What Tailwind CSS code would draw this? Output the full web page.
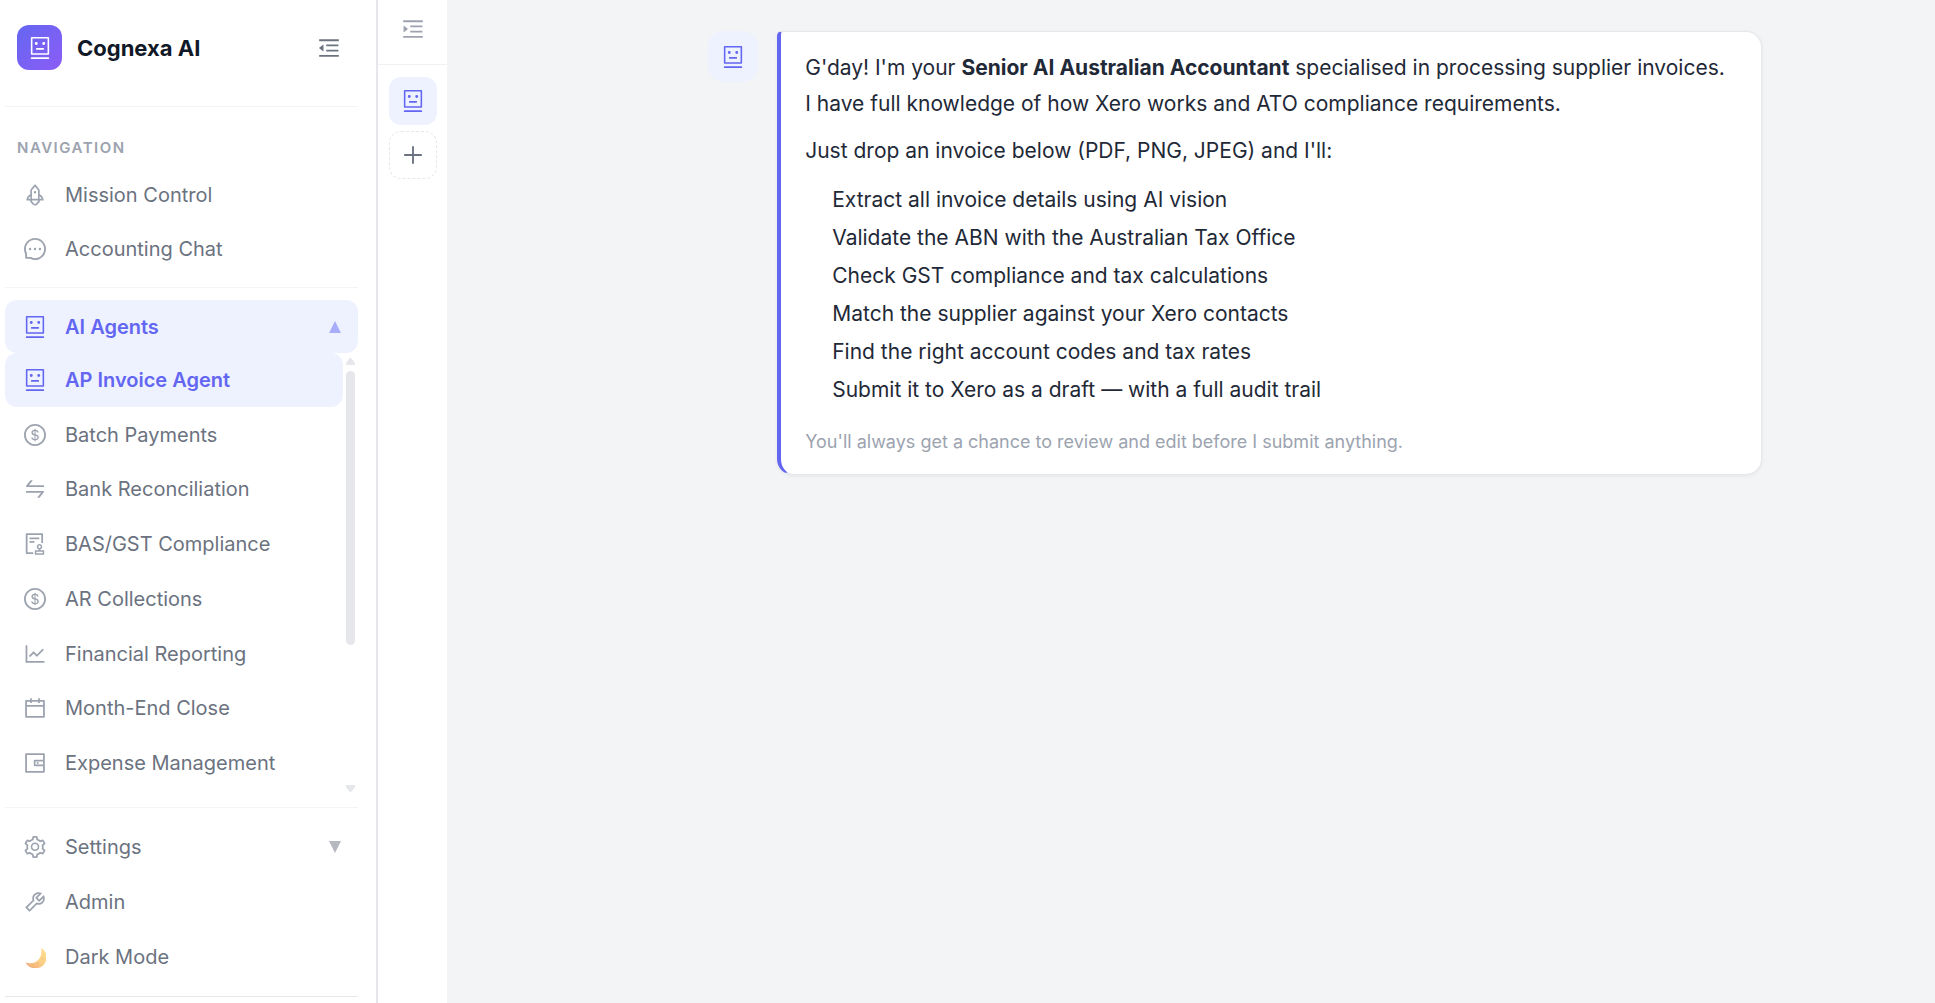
<!DOCTYPE html>
<html lang="en">
<head>
<meta charset="utf-8">
<title>Cognexa AI</title>
<script src="https://cdn.jsdelivr.net/npm/@tailwindcss/browser@4"></script>
</head>
<body class="bg-[#f3f4f6] font-['Inter',sans-serif] text-[#6b7280]">
<!-- Icon set -->
<svg class="hidden" aria-hidden="true">
  <symbol id="robot" viewBox="64 64 896 896"><path d="M300 328a60 60 0 10120 0 60 60 0 10-120 0zM852 64H172c-17.700 0-32 14.300-32 32v660c0 17.700 14.300 32 32 32h680c17.700 0 32-14.300 32-32V96c0-17.700-14.300-32-32-32zm-32 660H204V128h616v596zM604 328a60 60 0 10120 0 60 60 0 10-120 0zm250.200 556H169.800c-16.500 0-29.800 14.300-29.800 32v36c0 4.400 3.300 8 7.400 8h729.100c4.100 0 7.400-3.600 7.400-8v-36c.1-17.700-13.200-32-29.700-32zM664 508H360c-4.400 0-8 3.600-8 8v60c0 4.400 3.600 8 8 8h304c4.400 0 8-3.600 8-8v-60c0-4.400-3.600-8-8-8z"/></symbol>
  <symbol id="bars" viewBox="64 64 896 896"><path d="M408 442h480c4.400 0 8-3.600 8-8v-56c0-4.400-3.600-8-8-8H408c-4.400 0-8 3.600-8 8v56c0 4.400 3.600 8 8 8zm-8 204c0 4.400 3.600 8 8 8h480c4.400 0 8-3.600 8-8v-56c0-4.400-3.600-8-8-8H408c-4.400 0-8 3.600-8 8v56zm504-486H120c-4.400 0-8 3.600-8 8v56c0 4.400 3.600 8 8 8h784c4.400 0 8-3.600 8-8v-56c0-4.400-3.600-8-8-8zm0 632H120c-4.400 0-8 3.600-8 8v56c0 4.400 3.600 8 8 8h784c4.400 0 8-3.600 8-8v-56c0-4.400-3.600-8-8-8z"/></symbol>
  <symbol id="rocket" viewBox="64 64 896 896"><path d="M864 736c0-111.600-65.400-208-160-252.900V317.300c0-15.100-5.300-29.700-15.100-41.200L536.500 95.400C530.100 87.800 521 84 512 84s-18.100 3.800-24.500 11.400L335.100 276.100a63.970 63.970 0 00-15.100 41.200v165.800C225.400 528 160 624.400 160 736h156.500c-2.300 7.200-3.500 15-3.500 23.800 0 22.100 7.600 43.700 21.400 60.800a97.200 97.200 0 0043.100 30.600c23.100 54 75.600 88.800 134.500 88.800 29.100 0 57.300-8.600 81.400-24.800 23.600-15.800 41.900-37.900 53-64a97 97 0 0043.100-30.500 97.520 97.520 0 0021.400-60.800c0-8.400-1.100-16.400-3.100-23.800H864zM762.300 621.400c9.400 14.600 17 30.300 22.500 46.600H700V558.700a211.600 211.600 0 0162.300 62.700zM388 483.100V318.800l124-147 124 147V668H388V483.100zM239.200 668c5.500-16.300 13.100-32 22.500-46.600 16.300-25.200 37.500-46.500 62.300-62.700V668h-84.800zm388.900 116.200c-5.200 3-11.200 4.200-17.100 3.400l-19.500-2.400-2.800 19.400c-5.400 37.900-38.400 66.500-76.700 66.500-38.300 0-71.300-28.600-76.700-66.500l-2.800-19.500-19.500 2.500a27.700 27.700 0 01-17.100-3.500c-8.700-5-14.100-14.300-14.100-24.400 0-10.600 5.900-19.400 14.600-23.800h231.300c8.800 4.500 14.600 13.300 14.600 23.800-.1 10.200-5.500 19.600-14.200 24.500zM464 400a48 48 0 1096 0 48 48 0 10-96 0z"/></symbol>
  <symbol id="message" viewBox="64 64 896 896"><path d="M464 512a48 48 0 1096 0 48 48 0 10-96 0zm200 0a48 48 0 1096 0 48 48 0 10-96 0zm-400 0a48 48 0 1096 0 48 48 0 10-96 0zm661.200-173.600c-22.600-53.700-55-101.900-96.300-143.300a444.350 444.350 0 00-143.300-96.300C630.600 75.700 572.200 64 512 64h-2c-60.600.3-119.300 12.300-174.500 35.900a445.350 445.350 0 00-142 96.500c-40.900 41.300-73 89.300-95.200 142.800-23 55.400-34.600 114.300-34.300 174.900A449.400 449.400 0 00112 714v152a46 46 0 0046 46h152.100A449.400 449.400 0 00510 960h2.100c59.900 0 118-11.600 172.700-34.300a444.480 444.480 0 00142.800-95.200c41.300-40.900 73.800-88.700 96.500-142 23.600-55.200 35.600-113.900 35.900-174.500.3-60.900-11.500-120-34.800-175.600zm-151.100 438C704 845.800 611 884 512 884h-1.700c-60.300-.3-120.200-15.300-173.100-43.500l-8.400-4.500H188V695.200l-4.500-8.400C155.300 633.900 140.300 574 140 513.700c-.4-99.700 37.700-193.300 107.600-263.800 69.800-70.500 163.100-109.500 262.800-109.900h1.700c50 0 98.500 9.700 144.200 28.900 44.600 18.700 84.600 45.600 119 80 34.300 34.300 61.300 74.400 80 119 19.400 46.200 29.100 95.200 28.900 145.800-.6 99.600-39.700 192.900-110.100 262.700z"/></symbol>
  <symbol id="dollar" viewBox="64 64 896 896"><path d="M512 64C264.600 64 64 264.600 64 512s200.600 448 448 448 448-200.600 448-448S759.400 64 512 64zm0 820c-205.400 0-372-166.600-372-372s166.600-372 372-372 372 166.600 372 372-166.600 372-372 372zm47.700-395.200l-25.400-5.900V348.600c38 5.200 61.500 29 65.500 58.200.5 4 3.900 6.900 7.900 6.900h44.900c4.700 0 8.400-4.100 8-8.800-6.100-62.300-57.400-102.300-125.900-109.200V263c0-4.400-3.600-8-8-8h-28.100c-4.400 0-8 3.600-8 8v33c-70.800 6.900-126.200 46-126.200 119 0 67.600 49.800 100.200 102.100 112.700l24.700 6.300v142.700c-44.200-5.900-69-29.500-74.100-61.300-.6-3.800-4-6.600-7.900-6.600H363c-4.700 0-8.400 4-8 8.700 4.500 55 46.200 105.600 135.200 112.100V761c0 4.400 3.600 8 8 8h28.400c4.400 0 8-3.600 8-8.100l-.2-31.700c78.300-6.900 134.300-48.800 134.300-124-.1-69.400-44.200-100.400-109-116.400zm-68.600-16.200c-5.600-1.600-10.300-3.100-15-5-33.800-12.200-49.500-31.900-49.500-57.300 0-36.300 27.500-57 64.500-61.700v124zM534.300 677V543.300c3.100.9 5.900 1.600 8.800 2.200 47.300 14.400 63.200 34.400 63.200 65.100 0 39.100-29.400 62.600-72 66.400z"/></symbol>
  <symbol id="swap" viewBox="64 64 896 896"><path d="M847.900 592H152c-4.400 0-8 3.600-8 8v60c0 4.400 3.600 8 8 8h605.200L612.900 851c-4.100 5.200-.4 13 6.300 13h72.500c4.900 0 9.500-2.200 12.600-6.100l168.800-214.100c16.500-21 1.600-51.800-25.200-51.800zM872 356H266.800l144.300-183c4.100-5.200.4-13-6.300-13h-72.500c-4.900 0-9.500 2.200-12.600 6.100L150.900 380.200c-16.500 21-1.600 51.800 25.100 51.800h696c4.400 0 8-3.600 8-8v-60c0-4.400-3.600-8-8-8z"/></symbol>
  <symbol id="audit" viewBox="64 64 896 896"><path d="M296 250c-4.400 0-8 3.600-8 8v48c0 4.400 3.600 8 8 8h384c4.400 0 8-3.600 8-8v-48c0-4.400-3.600-8-8-8H296zm184 144H296c-4.400 0-8 3.600-8 8v48c0 4.400 3.600 8 8 8h184c4.400 0 8-3.600 8-8v-48c0-4.400-3.600-8-8-8zm-48 458H208V148h560v320c0 4.400 3.600 8 8 8h56c4.400 0 8-3.600 8-8V108c0-17.700-14.300-32-32-32H168c-17.700 0-32 14.300-32 32v784c0 17.700 14.300 32 32 32h264c4.400 0 8-3.600 8-8v-56c0-4.400-3.600-8-8-8zm440-88H728v-36.600c46.300-13.800 80-56.600 80-107.400 0-61.900-50.100-112-112-112s-112 50.100-112 112c0 50.700 33.700 93.600 80 107.400V764H520c-8.800 0-16 7.200-16 16v152c0 8.800 7.200 16 16 16h352c8.800 0 16-7.200 16-16V780c0-8.800-7.200-16-16-16zM646 620c0-27.600 22.400-50 50-50s50 22.400 50 50-22.400 50-50 50-50-22.400-50-50zm180 266H566v-60h260v60z"/></symbol>
  <symbol id="chart" viewBox="64 64 896 896"><path d="M888 792H200V168c0-4.400-3.600-8-8-8h-56c-4.400 0-8 3.600-8 8v688c0 4.400 3.600 8 8 8h752c4.400 0 8-3.600 8-8v-56c0-4.400-3.600-8-8-8zM305.800 637.700c3.100 3.100 8.100 3.100 11.300 0l138.300-137.600L583 628.500c3.100 3.100 8.200 3.100 11.300 0l275.400-275.300c3.100-3.100 3.100-8.200 0-11.300l-39.600-39.600a8.030 8.030 0 00-11.300 0l-230 229.900L461.400 404a8.030 8.030 0 00-11.300 0L266.300 586.700a8.030 8.030 0 000 11.300l39.500 39.700z"/></symbol>
  <symbol id="calendar" viewBox="64 64 896 896"><path d="M880 184H712v-64c0-4.400-3.600-8-8-8h-56c-4.400 0-8 3.600-8 8v64H384v-64c0-4.400-3.600-8-8-8h-56c-4.400 0-8 3.600-8 8v64H144c-17.700 0-32 14.300-32 32v664c0 17.700 14.300 32 32 32h736c17.700 0 32-14.300 32-32V216c0-17.700-14.300-32-32-32zm-40 656H184V460h656v380zM184 392V256h128v48c0 4.400 3.600 8 8 8h56c4.400 0 8-3.600 8-8v-48h256v48c0 4.400 3.600 8 8 8h56c4.400 0 8-3.600 8-8v-48h128v136H184z"/></symbol>
  <symbol id="wallet" viewBox="64 64 896 896"><path d="M880 112H144c-17.700 0-32 14.300-32 32v736c0 17.700 14.300 32 32 32h736c17.700 0 32-14.300 32-32V144c0-17.700-14.300-32-32-32zm-40 464H528V448h312v128zm0 264H184V184h656v200H496c-17.700 0-32 14.300-32 32v192c0 17.700 14.300 32 32 32h344v200zM580 512a40 40 0 1080 0 40 40 0 10-80 0z"/></symbol>
  <symbol id="setting" viewBox="64 64 896 896"><path d="M924.800 625.700l-65.500-56c3.100-19 4.700-38.400 4.700-57.800s-1.600-38.800-4.700-57.800l65.500-56a32.030 32.030 0 009.300-35.200l-.9-2.600a443.740 443.740 0 00-79.700-137.900l-1.800-2.100a32.120 32.120 0 00-35.100-9.500l-81.300 28.900c-30-24.600-63.500-44-99.700-57.600l-15.700-85a32.050 32.050 0 00-25.800-25.700l-2.700-.5c-52.100-9.400-106.900-9.400-159 0l-2.700.5a32.050 32.050 0 00-25.800 25.700l-15.800 85.400a351.860 351.860 0 00-99 57.400l-81.900-29.100a32 32 0 00-35.100 9.500l-1.800 2.100a446.020 446.020 0 00-79.700 137.900l-.9 2.600c-4.500 12.500-.8 26.500 9.300 35.200l66.300 56.600c-3.100 18.800-4.600 38-4.600 57.100 0 19.200 1.500 38.400 4.600 57.100L99 625.500a32.030 32.030 0 00-9.300 35.200l.9 2.600c18.100 50.400 44.900 96.900 79.700 137.900l1.800 2.100a32.120 32.120 0 0035.100 9.500l81.900-29.100c29.800 24.500 63.100 43.900 99 57.400l15.800 85.400a32.050 32.050 0 0025.800 25.700l2.700.5a449.400 449.400 0 00159 0l2.700-.5a32.050 32.050 0 0025.800-25.700l15.700-85a350 350 0 0099.700-57.600l81.300 28.900a32 32 0 0035.100-9.500l1.800-2.100c34.800-41.100 61.600-87.500 79.700-137.900l.9-2.600c4.500-12.300.8-26.300-9.300-35zM788.300 465.900c2.500 15.100 3.800 30.600 3.800 46.100s-1.300 31-3.800 46.100l-6.600 40.100 74.700 63.900a370.030 370.030 0 01-42.600 73.600L721 702.800l-31.400 25.800c-23.900 19.600-50.500 35-79.300 45.800l-38.100 14.300-17.900 97a377.500 377.500 0 01-85 0l-17.900-97.200-37.800-14.500c-28.500-10.800-55-26.200-78.700-45.700l-31.400-25.900-93.400 33.200c-17-22.900-31.200-47.600-42.600-73.600l75.500-64.500-6.500-40c-2.400-14.900-3.700-30.300-3.700-45.500 0-15.300 1.200-30.600 3.700-45.500l6.500-40-75.500-64.500c11.300-26.100 25.600-50.700 42.600-73.600l93.400 33.200 31.400-25.900c23.700-19.500 50.200-34.900 78.700-45.700l37.900-14.300 17.900-97.200c28.100-3.200 56.800-3.200 85 0l17.900 97 38.100 14.300c28.700 10.800 55.400 26.200 79.300 45.800l31.400 25.800 92.800-32.900c17 22.900 31.200 47.600 42.600 73.600L781.800 426l6.500 39.900zM512 326c-97.200 0-176 78.800-176 176s78.800 176 176 176 176-78.800 176-176-78.800-176-176-176zm79.200 255.200A111.600 111.600 0 01512 614c-29.900 0-58-11.700-79.200-32.800A111.600 111.600 0 01400 502c0-29.900 11.700-58 32.800-79.200C454 401.600 482.100 390 512 390c29.900 0 58 11.600 79.200 32.800A111.600 111.600 0 01624 502c0 29.900-11.700 58-32.800 79.200z"/></symbol>
  <symbol id="tool" viewBox="64 64 896 896"><path d="M876.600 239.500c-.5-.9-1.200-1.800-2-2.500-5-5-13.100-5-18.100 0L684.200 409.300l-67.900-67.900L788.700 169c.8-.8 1.400-1.600 2-2.500 3.600-6.100 1.600-13.900-4.500-17.500-98.200-58-226.800-44.700-311.300 39.700-67 67-89.200 162-66.500 247.400l-293 293c-3 3-2.800 7.900.3 11l169.700 169.700c3.100 3.100 8.100 3.300 11 .3l292.900-292.900c85.500 22.800 180.500.7 247.600-66.400 84.400-84.500 97.700-213.100 39.700-311.300zM786 499.800c-58.100 58.100-145.300 69.300-214.600 33.600l-8.800 8.800-.1-.1-274 274.100-79.200-79.200 230.100-230.100s0 .1.1.1l52.800-52.800c-35.700-69.300-24.500-156.500 33.600-214.600a184.200 184.200 0 01144-53.500L537 318.900a32.050 32.050 0 000 45.300l124.500 124.500a32.050 32.050 0 0045.300 0l132.800-132.800c3.700 51.800-14.400 104.800-53.600 143.900z"/></symbol>
</svg>

<div class="flex h-screen overflow-hidden">
  <!-- Sidebar -->
  <aside class="flex w-[378px] shrink-0 flex-col border-r-2 border-[#e5e7eb] bg-white pr-[18px] pl-[5px]">
    <div class="flex shrink-0 items-center border-b border-[#f3f4f6] pt-[25px] pr-[18px] pb-9 pl-3">
      <span class="flex size-[45px] items-center justify-center rounded-xl bg-linear-135 from-[#6366f1] to-[#8b5cf6] text-white"><svg class="size-[22px] fill-current"><use href="#robot"/></svg></span>
      <h1 class="ml-[15px] text-[22px] leading-7 font-bold text-[#111827]">Cognexa AI</h1>
      <button class="ml-auto" aria-label="Collapse sidebar"><svg class="size-[22px] fill-current" viewBox="64 64 896 896"><use href="#bars" x="64" y="64" width="896" height="896"/><path d="M115.400 518.900L271.700 642c5.800 4.600 14.400.5 14.400-6.900V388.900c0-7.400-8.500-11.500-14.400-6.900L115.400 505.100a8.740 8.740 0 000 13.800z"/></svg></button>
    </div>
    <h2 class="mt-[31px] shrink-0 pl-3 text-[15px] leading-5 font-semibold tracking-[1.5px] text-[#9ca3af]">NAVIGATION</h2>
    <nav class="mt-[10px] flex shrink-0 flex-col text-xl">
      <a href="#" class="flex h-[54px] items-center gap-[19px] pl-[19px]"><svg class="size-[22px] fill-[#9ca3af]"><use href="#rocket"/></svg>Mission Control</a>
      <a href="#" class="flex h-[54px] items-center gap-[19px] pl-[19px]"><svg class="size-[22px] fill-[#9ca3af]"><use href="#message"/></svg>Accounting Chat</a>
      <hr class="mt-[11px] mb-3 border-[#f3f4f6]">
      <button class="flex h-[53px] items-center gap-[19px] rounded-xl bg-[#eef2ff] pr-[17px] pl-[19px] font-semibold text-[#6366f1]"><svg class="size-[22px] fill-current"><use href="#robot"/></svg>AI Agents<svg class="ml-auto h-3 w-3 fill-[#6366f1]/50" viewBox="0 0 12 12"><path d="M6 0l6 12H0z"/></svg></button>
      <div class="flex">
        <div class="flex h-[437px] flex-1 flex-col justify-between">
          <a href="#" class="flex h-[54px] items-center gap-[19px] rounded-xl bg-[#eef2ff] pl-[19px] font-semibold text-[#6366f1]"><svg class="size-[22px] fill-current"><use href="#robot"/></svg>AP Invoice Agent</a>
          <a href="#" class="flex h-[54px] items-center gap-[19px] pl-[19px]"><svg class="size-[22px] fill-[#9ca3af]"><use href="#dollar"/></svg>Batch Payments</a>
          <a href="#" class="flex h-[54px] items-center gap-[19px] pl-[19px]"><svg class="size-[22px] fill-[#9ca3af]"><use href="#swap"/></svg>Bank Reconciliation</a>
          <a href="#" class="flex h-[54px] items-center gap-[19px] pl-[19px]"><svg class="size-[22px] fill-[#9ca3af]"><use href="#audit"/></svg>BAS/GST Compliance</a>
          <a href="#" class="flex h-[54px] items-center gap-[19px] pl-[19px]"><svg class="size-[22px] fill-[#9ca3af]"><use href="#dollar"/></svg>AR Collections</a>
          <a href="#" class="flex h-[54px] items-center gap-[19px] pl-[19px]"><svg class="size-[22px] fill-[#9ca3af]"><use href="#chart"/></svg>Financial Reporting</a>
          <a href="#" class="flex h-[54px] items-center gap-[19px] pl-[19px]"><svg class="size-[22px] fill-[#9ca3af]"><use href="#calendar"/></svg>Month-End Close</a>
          <a href="#" class="flex h-[54px] items-center gap-[19px] pl-[19px]"><svg class="size-[22px] fill-[#9ca3af]"><use href="#wallet"/></svg>Expense Management</a>
        </div>
        <!-- Scroll track of the agent list -->
        <div class="flex h-[442px] w-[15px] flex-col items-center pt-[5px] pb-[3px]" aria-hidden="true">
          <svg class="h-[7px] w-[9px] fill-[#e5e7eb]" viewBox="0 0 9 7"><path d="M3 1q1.500-2 3 0l3 4v2H0V5z"/></svg>
          <div class="mt-[6px] h-[274px] w-[9px] rounded-full bg-[#e5e7eb]"></div>
          <svg class="mt-auto h-[7px] w-[9px] fill-[#e5e7eb]" viewBox="0 0 9 7"><path d="M3 6q1.500 2 3 0l3-4V0H0v2z"/></svg>
        </div>
      </div>
      <hr class="mt-3 mb-3 border-[#f3f4f6]">
      <button class="flex h-[54px] items-center gap-[19px] pr-[17px] pl-[19px]"><svg class="size-[22px] fill-[#9ca3af]"><use href="#setting"/></svg>Settings<svg class="ml-auto h-3 w-3 fill-[#6b7280]/50" viewBox="0 0 12 12"><path d="M6 12L0 0h12z"/></svg></button>
      <a href="#" class="flex h-[55px] items-center gap-[19px] pl-[19px]"><svg class="size-[22px] fill-[#9ca3af]"><use href="#tool"/></svg>Admin</a>
      <button class="flex h-[55px] items-center gap-[19px] pl-[19px]"><svg class="size-[22px]" viewBox="0 0 22 22"><defs><linearGradient id="moon" x1="1" y1="0" x2="0.300" y2="1"><stop offset="0" stop-color="#ffe08f"/><stop offset="0.600" stop-color="#fbcf85"/><stop offset="1" stop-color="#f3ae7c"/></linearGradient></defs><path d="M17 2C23.500 5.500 24.500 13.500 19.500 19C14.500 24 5 23.500 1.500 16.500C7 18.500 13 16.500 15.700 12C17.500 9 17.800 5.500 17 2z" fill="url(#moon)"/><g fill="#eebb78"><circle cx="8.500" cy="19.500" r="1.300"/><circle cx="14" cy="17.500" r="0.800"/><circle cx="18.500" cy="12.500" r="0.800"/></g></svg>Dark Mode</button>
      <hr class="mt-3 border-[#e5e7eb]">
    </nav>
  </aside>

  <!-- Agent rail -->
  <aside class="flex w-[70px] shrink-0 flex-col items-center border-r border-[#f3f4f6] bg-white">
    <div class="flex w-full justify-center border-b border-[#f0f1f3] pt-[18px] pb-6">
      <button class="text-[#9ca3af]" aria-label="Expand panel"><svg class="size-[22px] fill-current" viewBox="64 64 896 896"><use href="#bars" x="64" y="64" width="896" height="896"/><path d="M142.400 642.100L298.700 519a8.840 8.840 0 000-13.900L142.400 381.900c-5.800-4.600-14.400-.5-14.400 6.900v246.300a8.900 8.900 0 0014.400 7z"/></svg></button>
    </div>
    <button class="mt-3 flex size-12 items-center justify-center rounded-xl bg-[#eef2ff] text-[#6366f1]" aria-label="AP Invoice Agent"><svg class="size-[22px] fill-current"><use href="#robot"/></svg></button>
    <button class="mt-[6px] flex size-12 items-center justify-center rounded-xl border border-dashed border-[#e5e7eb]" aria-label="Add agent"><svg class="size-[22px] fill-current" viewBox="64 64 896 896"><path d="M482 152h60q8 0 8 8v704q0 8-8 8h-60q-8 0-8-8V160q0-8 8-8zM160 474h704q8 0 8 8v60q0 8-8 8H160q-8 0-8-8v-60q0-8 8-8z"/></svg></button>
  </aside>

  <!-- Conversation -->
  <main class="flex min-w-0 flex-1 items-start justify-center pt-[31px] pl-[87px]">
    <div class="flex items-start gap-[19px]">
      <span class="flex h-[51px] w-[50px] shrink-0 items-center justify-center rounded-2xl bg-[#eef2ff] text-[#6366f1]"><svg class="size-[22px] fill-current"><use href="#robot"/></svg></span>
      <article class="rounded-2xl rounded-tl-[5px] border border-l-4 border-[#e5e7eb] border-l-[#6366f1] bg-white pt-[18px] pr-9 pb-4 pl-6 text-[21px] leading-9 text-[#1f2937] shadow-[0_1px_4px_rgb(0_0_0/0.06)]">
        <p>G'day! I'm your <strong class="font-bold">Senior AI Australian Accountant</strong> specialised in processing supplier invoices.<br>I have full knowledge of how Xero works and ATO compliance requirements.</p>
        <p class="mt-[11px]">Just drop an invoice below (PDF, PNG, JPEG) and I'll:</p>
        <ul class="mt-3 pl-[27px] leading-[38px]">
          <li>Extract all invoice details using AI vision</li>
          <li>Validate the ABN with the Australian Tax Office</li>
          <li>Check GST compliance and tax calculations</li>
          <li>Match the supplier against your Xero contacts</li>
          <li>Find the right account codes and tax rates</li>
          <li>Submit it to Xero as a draft — with a full audit trail</li>
        </ul>
        <p class="mt-[17px] text-lg leading-8 text-[#9ca3af]">You'll always get a chance to review and edit before I submit anything.</p>
      </article>
    </div>
  </main>
</div>
</body>
</html>
